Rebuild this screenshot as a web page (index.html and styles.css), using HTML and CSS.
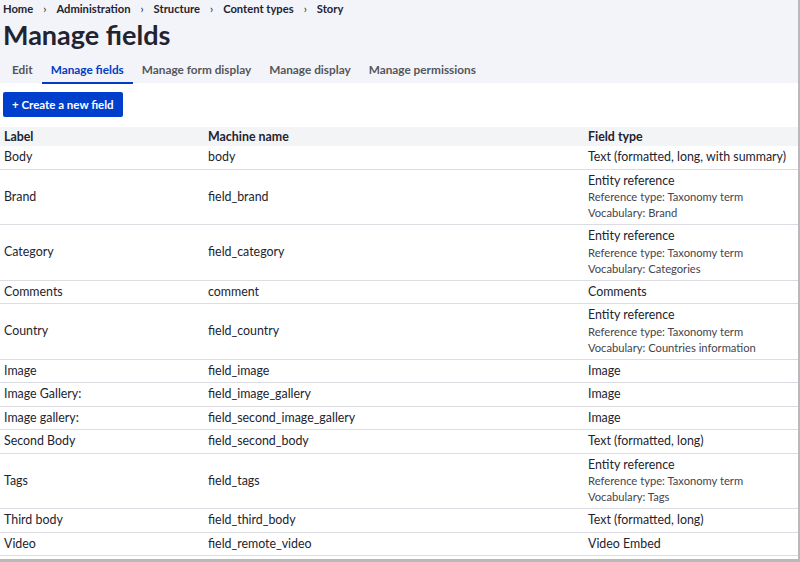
FILE: index.html
```html
<!DOCTYPE html>
<html lang="en">
<head>
<meta charset="UTF-8">
<title>Manage fields | Story</title>
<link rel="stylesheet" href="styles.css">
</head>
<body>

<div class="page">

<!-- Header with breadcrumb, title and tabs -->
<div class="page-header">
    <ol class="breadcrumb">
        <li>Home</li>
        <li>Administration</li>
        <li>Structure</li>
        <li>Content types</li>
        <li>Story</li>
    </ol>
    <h1>Manage fields</h1>
    <ul class="tabs">
        <li>Edit</li>
        <li class="active">Manage fields</li>
        <li>Manage form display</li>
        <li>Manage display</li>
        <li>Manage permissions</li>
    </ul>
</div>

<div class="content">
    <button class="btn-primary">+ Create a new field</button>

    <table class="fields">
        <thead>
            <tr><th class="col-label">Label</th><th class="col-machine">Machine name</th><th>Field type</th></tr>
        </thead>
        <tbody>
            <tr><td>Body</td><td>body</td><td>Text (formatted, long, with summary)</td></tr>
            <tr><td>Brand</td><td>field_brand</td><td>Entity reference<div class="sub">Reference type: Taxonomy term</div><div class="sub">Vocabulary: Brand</div></td></tr>
            <tr><td>Category</td><td>field_category</td><td>Entity reference<div class="sub">Reference type: Taxonomy term</div><div class="sub">Vocabulary: Categories</div></td></tr>
            <tr><td>Comments</td><td>comment</td><td>Comments</td></tr>
            <tr><td>Country</td><td>field_country</td><td>Entity reference<div class="sub">Reference type: Taxonomy term</div><div class="sub">Vocabulary: Countries information</div></td></tr>
            <tr><td>Image</td><td>field_image</td><td>Image</td></tr>
            <tr><td>Image Gallery:</td><td>field_image_gallery</td><td>Image</td></tr>
            <tr><td>Image gallery:</td><td>field_second_image_gallery</td><td>Image</td></tr>
            <tr><td>Second Body</td><td>field_second_body</td><td>Text (formatted, long)</td></tr>
            <tr><td>Tags</td><td>field_tags</td><td>Entity reference<div class="sub">Reference type: Taxonomy term</div><div class="sub">Vocabulary: Tags</div></td></tr>
            <tr><td>Third body</td><td>field_third_body</td><td>Text (formatted, long)</td></tr>
            <tr><td>Video</td><td>field_remote_video</td><td>Video Embed</td></tr>
        </tbody>
    </table>
</div>

</div>

</body>
</html>
```

FILE: styles.css
```css
html, body {margin:0;padding:0;background:#ffffff;}
body {font-family:Lato,"Open Sans",Arial,sans-serif;color:#222330;}
.page {width:798px;height:559px;border-right:2px solid #b9b9bd;border-bottom:3px solid #b9b9bd;overflow:hidden;}

.page-header {background:#f3f4f9;padding:0 3px;height:83px;}
.breadcrumb {list-style:none;margin:0;padding:2px 0 0;display:flex;font-size:11.2px;font-weight:bold;line-height:13px;}
.breadcrumb li + li:before {content:"\203A";display:inline-block;padding:0 10px 0 10px;font-weight:normal;}
h1 {margin:0;font-size:27px;line-height:30px;padding-top:5px;}
.tabs {list-style:none;margin:0;padding:7px 0 0;display:flex;font-size:11.8px;font-weight:bold;color:#55565b;}
.tabs li {padding:6px 9px 6px;line-height:14px;}
.tabs li.active {color:#003cc5;border-bottom:2px solid #003cc5;padding-bottom:5px;}

.content {padding:9px 0 0 3px;}
.btn-primary {background:#003ecc;color:#fff;border:none;border-radius:2px;font-family:inherit;font-size:11.5px;font-weight:bold;height:25px;padding:0 9px;cursor:pointer;}

table.fields {margin:10px 0 0 -3px;width:798px;border-collapse:collapse;font-size:12.4px;}
.fields th {background:#f3f4f6;text-align:left;font-weight:bold;height:19px;padding:0 4px;line-height:19px;}
.fields th.col-label {width:196px;}
.fields th.col-machine {width:372px;}
.fields td {padding:3px 4px 3px;line-height:16.5px;border-bottom:1px solid #dcdde2;vertical-align:middle;white-space:nowrap;}
.fields td .sub {font-size:11.2px;line-height:16px;color:#44454d;}
```
